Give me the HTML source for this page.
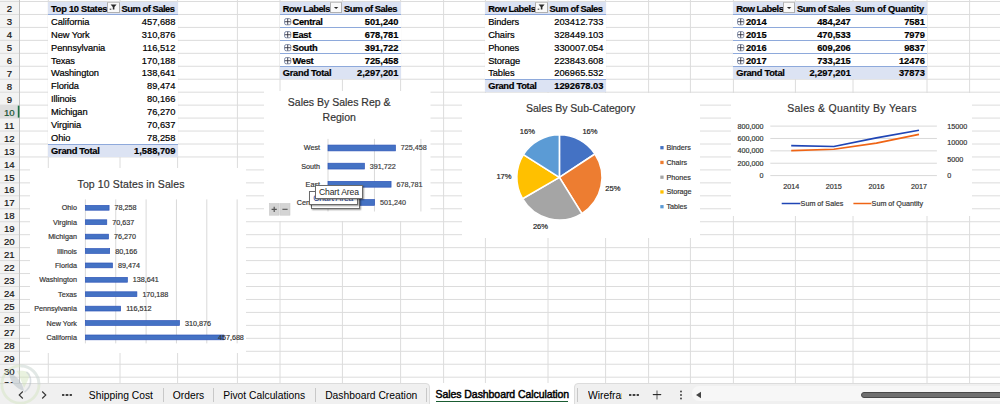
<!DOCTYPE html><html><head><meta charset="utf-8"><style>
*{margin:0;padding:0;box-sizing:border-box}
html,body{width:1000px;height:404px;overflow:hidden;background:#fff;font-family:"Liberation Sans",sans-serif;color:#000}
.a{position:absolute;white-space:nowrap}
.c{position:absolute;white-space:nowrap;font-size:9.3px;line-height:13px;height:13px;-webkit-text-stroke:0.2px #000}
.b{font-weight:bold}
.r{text-align:right}
.hdr{background:#d9e1f2}
</style></head><body>
<svg class="a" style="left:0;top:0" width="1000" height="384" viewBox="0 0 1000 384"><rect x="0" y="0" width="19.5" height="384" fill="#f3f3f3"/><rect x="0" y="105.14" width="19.5" height="12.96" fill="#dedede"/><line x1="0" x2="1000" y1="1.50" y2="1.50" stroke="#dcdcdc" stroke-width="1"/><line x1="0" x2="1000" y1="14.46" y2="14.46" stroke="#dcdcdc" stroke-width="1"/><line x1="0" x2="1000" y1="27.41" y2="27.41" stroke="#dcdcdc" stroke-width="1"/><line x1="0" x2="1000" y1="40.37" y2="40.37" stroke="#dcdcdc" stroke-width="1"/><line x1="0" x2="1000" y1="53.32" y2="53.32" stroke="#dcdcdc" stroke-width="1"/><line x1="0" x2="1000" y1="66.28" y2="66.28" stroke="#dcdcdc" stroke-width="1"/><line x1="0" x2="1000" y1="79.23" y2="79.23" stroke="#dcdcdc" stroke-width="1"/><line x1="0" x2="1000" y1="92.19" y2="92.19" stroke="#dcdcdc" stroke-width="1"/><line x1="0" x2="1000" y1="105.14" y2="105.14" stroke="#dcdcdc" stroke-width="1"/><line x1="0" x2="1000" y1="118.09" y2="118.09" stroke="#dcdcdc" stroke-width="1"/><line x1="0" x2="1000" y1="131.05" y2="131.05" stroke="#dcdcdc" stroke-width="1"/><line x1="0" x2="1000" y1="144.00" y2="144.00" stroke="#dcdcdc" stroke-width="1"/><line x1="0" x2="1000" y1="156.96" y2="156.96" stroke="#dcdcdc" stroke-width="1"/><line x1="0" x2="1000" y1="169.91" y2="169.91" stroke="#dcdcdc" stroke-width="1"/><line x1="0" x2="1000" y1="182.87" y2="182.87" stroke="#dcdcdc" stroke-width="1"/><line x1="0" x2="1000" y1="195.82" y2="195.82" stroke="#dcdcdc" stroke-width="1"/><line x1="0" x2="1000" y1="208.78" y2="208.78" stroke="#dcdcdc" stroke-width="1"/><line x1="0" x2="1000" y1="221.74" y2="221.74" stroke="#dcdcdc" stroke-width="1"/><line x1="0" x2="1000" y1="234.69" y2="234.69" stroke="#dcdcdc" stroke-width="1"/><line x1="0" x2="1000" y1="247.65" y2="247.65" stroke="#dcdcdc" stroke-width="1"/><line x1="0" x2="1000" y1="260.60" y2="260.60" stroke="#dcdcdc" stroke-width="1"/><line x1="0" x2="1000" y1="273.56" y2="273.56" stroke="#dcdcdc" stroke-width="1"/><line x1="0" x2="1000" y1="286.51" y2="286.51" stroke="#dcdcdc" stroke-width="1"/><line x1="0" x2="1000" y1="299.46" y2="299.46" stroke="#dcdcdc" stroke-width="1"/><line x1="0" x2="1000" y1="312.42" y2="312.42" stroke="#dcdcdc" stroke-width="1"/><line x1="0" x2="1000" y1="325.38" y2="325.38" stroke="#dcdcdc" stroke-width="1"/><line x1="0" x2="1000" y1="338.33" y2="338.33" stroke="#dcdcdc" stroke-width="1"/><line x1="0" x2="1000" y1="351.29" y2="351.29" stroke="#dcdcdc" stroke-width="1"/><line x1="0" x2="1000" y1="364.24" y2="364.24" stroke="#dcdcdc" stroke-width="1"/><line x1="0" x2="1000" y1="377.19" y2="377.19" stroke="#dcdcdc" stroke-width="1"/><line x1="48.30" x2="48.30" y1="0" y2="384" stroke="#dcdcdc" stroke-width="1"/><line x1="120.00" x2="120.00" y1="0" y2="384" stroke="#dcdcdc" stroke-width="1"/><line x1="177.60" x2="177.60" y1="0" y2="384" stroke="#dcdcdc" stroke-width="1"/><line x1="237.40" x2="237.40" y1="0" y2="384" stroke="#dcdcdc" stroke-width="1"/><line x1="280.00" x2="280.00" y1="0" y2="384" stroke="#dcdcdc" stroke-width="1"/><line x1="342.40" x2="342.40" y1="0" y2="384" stroke="#dcdcdc" stroke-width="1"/><line x1="400.60" x2="400.60" y1="0" y2="384" stroke="#dcdcdc" stroke-width="1"/><line x1="443.60" x2="443.60" y1="0" y2="384" stroke="#dcdcdc" stroke-width="1"/><line x1="485.40" x2="485.40" y1="0" y2="384" stroke="#dcdcdc" stroke-width="1"/><line x1="548.00" x2="548.00" y1="0" y2="384" stroke="#dcdcdc" stroke-width="1"/><line x1="605.60" x2="605.60" y1="0" y2="384" stroke="#dcdcdc" stroke-width="1"/><line x1="648.60" x2="648.60" y1="0" y2="384" stroke="#dcdcdc" stroke-width="1"/><line x1="690.40" x2="690.40" y1="0" y2="384" stroke="#dcdcdc" stroke-width="1"/><line x1="733.40" x2="733.40" y1="0" y2="384" stroke="#dcdcdc" stroke-width="1"/><line x1="795.40" x2="795.40" y1="0" y2="384" stroke="#dcdcdc" stroke-width="1"/><line x1="853.00" x2="853.00" y1="0" y2="384" stroke="#dcdcdc" stroke-width="1"/><line x1="927.00" x2="927.00" y1="0" y2="384" stroke="#dcdcdc" stroke-width="1"/><line x1="969.60" x2="969.60" y1="0" y2="384" stroke="#dcdcdc" stroke-width="1"/><line x1="19.5" x2="19.5" y1="0" y2="384" stroke="#c2c2c2" stroke-width="1"/><rect x="17.8" y="105.64" width="1.6" height="11.96" fill="#1e7145"/></svg>
<div class="c" style="left:0;width:18.6px;top:2.10px;text-align:center;color:#222;font-size:9.6px">2</div>
<div class="c" style="left:0;width:18.6px;top:15.05px;text-align:center;color:#222;font-size:9.6px">3</div>
<div class="c" style="left:0;width:18.6px;top:28.01px;text-align:center;color:#222;font-size:9.6px">4</div>
<div class="c" style="left:0;width:18.6px;top:40.97px;text-align:center;color:#222;font-size:9.6px">5</div>
<div class="c" style="left:0;width:18.6px;top:53.92px;text-align:center;color:#222;font-size:9.6px">6</div>
<div class="c" style="left:0;width:18.6px;top:66.88px;text-align:center;color:#222;font-size:9.6px">7</div>
<div class="c" style="left:0;width:18.6px;top:79.83px;text-align:center;color:#222;font-size:9.6px">8</div>
<div class="c" style="left:0;width:18.6px;top:92.78px;text-align:center;color:#222;font-size:9.6px">9</div>
<div class="c" style="left:0;width:18.6px;top:105.74px;text-align:center;color:#1e7145;font-size:9.6px">10</div>
<div class="c" style="left:0;width:18.6px;top:118.69px;text-align:center;color:#222;font-size:9.6px">11</div>
<div class="c" style="left:0;width:18.6px;top:131.65px;text-align:center;color:#222;font-size:9.6px">12</div>
<div class="c" style="left:0;width:18.6px;top:144.60px;text-align:center;color:#222;font-size:9.6px">13</div>
<div class="c" style="left:0;width:18.6px;top:157.56px;text-align:center;color:#222;font-size:9.6px">14</div>
<div class="c" style="left:0;width:18.6px;top:170.51px;text-align:center;color:#222;font-size:9.6px">15</div>
<div class="c" style="left:0;width:18.6px;top:183.47px;text-align:center;color:#222;font-size:9.6px">16</div>
<div class="c" style="left:0;width:18.6px;top:196.42px;text-align:center;color:#222;font-size:9.6px">17</div>
<div class="c" style="left:0;width:18.6px;top:209.38px;text-align:center;color:#222;font-size:9.6px">18</div>
<div class="c" style="left:0;width:18.6px;top:222.34px;text-align:center;color:#222;font-size:9.6px">19</div>
<div class="c" style="left:0;width:18.6px;top:235.29px;text-align:center;color:#222;font-size:9.6px">20</div>
<div class="c" style="left:0;width:18.6px;top:248.25px;text-align:center;color:#222;font-size:9.6px">21</div>
<div class="c" style="left:0;width:18.6px;top:261.20px;text-align:center;color:#222;font-size:9.6px">22</div>
<div class="c" style="left:0;width:18.6px;top:274.16px;text-align:center;color:#222;font-size:9.6px">23</div>
<div class="c" style="left:0;width:18.6px;top:287.11px;text-align:center;color:#222;font-size:9.6px">24</div>
<div class="c" style="left:0;width:18.6px;top:300.06px;text-align:center;color:#222;font-size:9.6px">25</div>
<div class="c" style="left:0;width:18.6px;top:313.02px;text-align:center;color:#222;font-size:9.6px">26</div>
<div class="c" style="left:0;width:18.6px;top:325.98px;text-align:center;color:#222;font-size:9.6px">27</div>
<div class="c" style="left:0;width:18.6px;top:338.93px;text-align:center;color:#222;font-size:9.6px">28</div>
<div class="c" style="left:0;width:18.6px;top:351.89px;text-align:center;color:#222;font-size:9.6px">29</div>
<div class="c" style="left:0;width:18.6px;top:364.84px;text-align:center;color:#222;font-size:9.6px">30</div>
<div class="c" style="left:0;width:18.6px;top:377.80px;text-align:center;color:#222;font-size:9.6px">31</div>
<div class="a" style="left:48.30px;width:129.30px;top:1.50px;height:155.46px;background:#fff"></div>
<div class="a" style="left:48.30px;width:129.30px;top:1.50px;height:12.96px;background:#dce3f3"></div>
<div class="c b" style="left:48.30px;top:2.70px;padding-left:2.8px;letter-spacing:-0.28px;">Top 10 States</div>
<div class="a" style="left:107.10px;width:12.70px;top:1.60px;height:11.90px;background:#f9f9f9;border:1px solid #b0b0b0;border-top-color:#c8c8c8"></div>
<svg class="a" style="left:107.10px;top:0" width="12" height="14" viewBox="0 0 12 14"><path d="M3.6 4.6h6l-2.2 2.4v2.6h-1.6v-2.6z" fill="#2a2a2a"/><rect x="2.7" y="8.7" width="1.6" height="1" fill="#333"/></svg>
<div class="c b" style="left:120.00px;top:2.70px;padding-left:1.5px;letter-spacing:-0.45px;">Sum of Sales</div>
<div class="a" style="left:48.30px;width:129.30px;top:13.96px;height:1.00px;background:#8ea9db"></div>
<div class="c" style="left:48.30px;top:15.65px;padding-left:2.8px;letter-spacing:-0.10px;">California</div>
<div class="c r" style="left:120.00px;width:57.60px;top:15.65px;padding-right:2.2px;letter-spacing:0.00px;">457,688</div>
<div class="c" style="left:48.30px;top:28.61px;padding-left:2.8px;letter-spacing:-0.10px;">New York</div>
<div class="c r" style="left:120.00px;width:57.60px;top:28.61px;padding-right:2.2px;letter-spacing:0.00px;">310,876</div>
<div class="c" style="left:48.30px;top:41.57px;padding-left:2.8px;letter-spacing:-0.10px;">Pennsylvania</div>
<div class="c r" style="left:120.00px;width:57.60px;top:41.57px;padding-right:2.2px;letter-spacing:0.00px;">116,512</div>
<div class="c" style="left:48.30px;top:54.52px;padding-left:2.8px;letter-spacing:-0.10px;">Texas</div>
<div class="c r" style="left:120.00px;width:57.60px;top:54.52px;padding-right:2.2px;letter-spacing:0.00px;">170,188</div>
<div class="c" style="left:48.30px;top:67.48px;padding-left:2.8px;letter-spacing:-0.10px;">Washington</div>
<div class="c r" style="left:120.00px;width:57.60px;top:67.48px;padding-right:2.2px;letter-spacing:0.00px;">138,641</div>
<div class="c" style="left:48.30px;top:80.43px;padding-left:2.8px;letter-spacing:-0.10px;">Florida</div>
<div class="c r" style="left:120.00px;width:57.60px;top:80.43px;padding-right:2.2px;letter-spacing:0.00px;">89,474</div>
<div class="c" style="left:48.30px;top:93.39px;padding-left:2.8px;letter-spacing:-0.10px;">Illinois</div>
<div class="c r" style="left:120.00px;width:57.60px;top:93.39px;padding-right:2.2px;letter-spacing:0.00px;">80,166</div>
<div class="c" style="left:48.30px;top:106.34px;padding-left:2.8px;letter-spacing:-0.10px;">Michigan</div>
<div class="c r" style="left:120.00px;width:57.60px;top:106.34px;padding-right:2.2px;letter-spacing:0.00px;">76,270</div>
<div class="c" style="left:48.30px;top:119.30px;padding-left:2.8px;letter-spacing:-0.10px;">Virginia</div>
<div class="c r" style="left:120.00px;width:57.60px;top:119.30px;padding-right:2.2px;letter-spacing:0.00px;">70,637</div>
<div class="c" style="left:48.30px;top:132.25px;padding-left:2.8px;letter-spacing:-0.10px;">Ohio</div>
<div class="c r" style="left:120.00px;width:57.60px;top:132.25px;padding-right:2.2px;letter-spacing:0.00px;">78,258</div>
<div class="a" style="left:48.30px;width:129.30px;top:144.00px;height:12.96px;background:#dce3f3"></div>
<div class="a" style="left:48.30px;width:129.30px;top:143.50px;height:1.00px;background:#8ea9db"></div>
<div class="c b" style="left:48.30px;top:145.20px;padding-left:2.8px;letter-spacing:-0.28px;">Grand Total</div>
<div class="c b r" style="left:120.00px;width:57.60px;top:145.20px;padding-right:2.2px;letter-spacing:0.00px;">1,588,709</div>
<div class="a" style="left:280.00px;width:120.60px;top:1.50px;height:77.73px;background:#fff"></div>
<div class="a" style="left:280.00px;width:120.60px;top:1.50px;height:12.96px;background:#dce3f3"></div>
<div class="c b" style="left:280.00px;top:2.70px;padding-left:2.8px;letter-spacing:-0.45px;">Row Labels</div>
<div class="a" style="left:330.30px;width:12.10px;top:1.60px;height:11.90px;background:#f9f9f9;border:1px solid #b0b0b0;border-top-color:#c8c8c8"></div>
<svg class="a" style="left:331.35px;top:0" width="10" height="14" viewBox="0 0 10 14"><path d="M2.9 7h4.4l-2.2 2.1z" fill="#2a2a2a"/></svg>
<div class="c b" style="left:342.40px;top:2.70px;padding-left:1.5px;letter-spacing:-0.45px;">Sum of Sales</div>
<div class="a" style="left:280.00px;width:120.60px;top:13.96px;height:1.00px;background:#8ea9db"></div>
<svg class="a" style="left:283.60px;top:17.63px" width="8" height="8" viewBox="0 0 8 8"><rect x="0.6" y="0.6" width="6.2" height="6.2" rx="1.6" fill="#fff" stroke="#6a7898" stroke-width="0.85"/><path d="M0.8 3.7h5.8M3.7 0.8v5.8" stroke="#2a2a3a" stroke-width="0.85"/></svg>
<div class="c b" style="left:280.00px;top:15.65px;padding-left:12.5px;letter-spacing:-0.28px;">Central</div>
<div class="c b r" style="left:342.40px;width:58.20px;top:15.65px;padding-right:2.2px;letter-spacing:0.00px;">501,240</div>
<div class="a" style="left:280.00px;width:120.60px;top:26.91px;height:1.00px;background:#8ea9db"></div>
<svg class="a" style="left:283.60px;top:30.59px" width="8" height="8" viewBox="0 0 8 8"><rect x="0.6" y="0.6" width="6.2" height="6.2" rx="1.6" fill="#fff" stroke="#6a7898" stroke-width="0.85"/><path d="M0.8 3.7h5.8M3.7 0.8v5.8" stroke="#2a2a3a" stroke-width="0.85"/></svg>
<div class="c b" style="left:280.00px;top:28.61px;padding-left:12.5px;letter-spacing:-0.28px;">East</div>
<div class="c b r" style="left:342.40px;width:58.20px;top:28.61px;padding-right:2.2px;letter-spacing:0.00px;">678,781</div>
<div class="a" style="left:280.00px;width:120.60px;top:39.87px;height:1.00px;background:#8ea9db"></div>
<svg class="a" style="left:283.60px;top:43.54px" width="8" height="8" viewBox="0 0 8 8"><rect x="0.6" y="0.6" width="6.2" height="6.2" rx="1.6" fill="#fff" stroke="#6a7898" stroke-width="0.85"/><path d="M0.8 3.7h5.8M3.7 0.8v5.8" stroke="#2a2a3a" stroke-width="0.85"/></svg>
<div class="c b" style="left:280.00px;top:41.57px;padding-left:12.5px;letter-spacing:-0.28px;">South</div>
<div class="c b r" style="left:342.40px;width:58.20px;top:41.57px;padding-right:2.2px;letter-spacing:0.00px;">391,722</div>
<div class="a" style="left:280.00px;width:120.60px;top:52.82px;height:1.00px;background:#8ea9db"></div>
<svg class="a" style="left:283.60px;top:56.50px" width="8" height="8" viewBox="0 0 8 8"><rect x="0.6" y="0.6" width="6.2" height="6.2" rx="1.6" fill="#fff" stroke="#6a7898" stroke-width="0.85"/><path d="M0.8 3.7h5.8M3.7 0.8v5.8" stroke="#2a2a3a" stroke-width="0.85"/></svg>
<div class="c b" style="left:280.00px;top:54.52px;padding-left:12.5px;letter-spacing:-0.28px;">West</div>
<div class="c b r" style="left:342.40px;width:58.20px;top:54.52px;padding-right:2.2px;letter-spacing:0.00px;">725,458</div>
<div class="a" style="left:280.00px;width:120.60px;top:65.78px;height:1.00px;background:#8ea9db"></div>
<div class="a" style="left:280.00px;width:120.60px;top:66.28px;height:12.96px;background:#dce3f3"></div>
<div class="a" style="left:280.00px;width:120.60px;top:65.78px;height:1.00px;background:#8ea9db"></div>
<div class="c b" style="left:280.00px;top:67.48px;padding-left:2.8px;letter-spacing:-0.28px;">Grand Total</div>
<div class="c b r" style="left:342.40px;width:58.20px;top:67.48px;padding-right:2.2px;letter-spacing:0.00px;">2,297,201</div>
<div class="a" style="left:485.40px;width:120.20px;top:1.50px;height:90.69px;background:#fff"></div>
<div class="a" style="left:485.40px;width:120.20px;top:1.50px;height:12.96px;background:#dce3f3"></div>
<div class="c b" style="left:485.40px;top:2.70px;padding-left:2.8px;letter-spacing:-0.45px;">Row Labels</div>
<div class="a" style="left:535.30px;width:12.30px;top:1.60px;height:11.90px;background:#f9f9f9;border:1px solid #b0b0b0;border-top-color:#c8c8c8"></div>
<svg class="a" style="left:535.30px;top:0" width="12" height="14" viewBox="0 0 12 14"><path d="M3.6 4.6h6l-2.2 2.4v2.6h-1.6v-2.6z" fill="#2a2a2a"/><rect x="2.7" y="8.7" width="1.6" height="1" fill="#333"/></svg>
<div class="c b" style="left:548.00px;top:2.70px;padding-left:1.5px;letter-spacing:-0.45px;">Sum of Sales</div>
<div class="a" style="left:485.40px;width:120.20px;top:13.96px;height:1.00px;background:#8ea9db"></div>
<div class="c" style="left:485.40px;top:15.65px;padding-left:2.8px;letter-spacing:-0.10px;">Binders</div>
<div class="c r" style="left:548.00px;width:57.60px;top:15.65px;padding-right:2.2px;letter-spacing:0.00px;">203412.733</div>
<div class="c" style="left:485.40px;top:28.61px;padding-left:2.8px;letter-spacing:-0.10px;">Chairs</div>
<div class="c r" style="left:548.00px;width:57.60px;top:28.61px;padding-right:2.2px;letter-spacing:0.00px;">328449.103</div>
<div class="c" style="left:485.40px;top:41.57px;padding-left:2.8px;letter-spacing:-0.10px;">Phones</div>
<div class="c r" style="left:548.00px;width:57.60px;top:41.57px;padding-right:2.2px;letter-spacing:0.00px;">330007.054</div>
<div class="c" style="left:485.40px;top:54.52px;padding-left:2.8px;letter-spacing:-0.10px;">Storage</div>
<div class="c r" style="left:548.00px;width:57.60px;top:54.52px;padding-right:2.2px;letter-spacing:0.00px;">223843.608</div>
<div class="c" style="left:485.40px;top:67.48px;padding-left:2.8px;letter-spacing:-0.10px;">Tables</div>
<div class="c r" style="left:548.00px;width:57.60px;top:67.48px;padding-right:2.2px;letter-spacing:0.00px;">206965.532</div>
<div class="a" style="left:485.40px;width:120.20px;top:79.23px;height:12.96px;background:#dce3f3"></div>
<div class="a" style="left:485.40px;width:120.20px;top:78.73px;height:1.00px;background:#8ea9db"></div>
<div class="c b" style="left:485.40px;top:80.43px;padding-left:2.8px;letter-spacing:-0.28px;">Grand Total</div>
<div class="c b r" style="left:548.00px;width:57.60px;top:80.43px;padding-right:2.2px;letter-spacing:0.00px;">1292678.03</div>
<div class="a" style="left:733.40px;width:193.60px;top:1.50px;height:77.73px;background:#fff"></div>
<div class="a" style="left:733.40px;width:193.60px;top:1.50px;height:12.96px;background:#dce3f3"></div>
<div class="c b" style="left:733.40px;top:2.70px;padding-left:2.8px;letter-spacing:-0.45px;">Row Labels</div>
<div class="a" style="left:783.40px;width:12.00px;top:1.60px;height:11.90px;background:#f9f9f9;border:1px solid #b0b0b0;border-top-color:#c8c8c8"></div>
<svg class="a" style="left:784.40px;top:0" width="10" height="14" viewBox="0 0 10 14"><path d="M2.9 7h4.4l-2.2 2.1z" fill="#2a2a2a"/></svg>
<div class="c b" style="left:795.40px;top:2.70px;padding-left:1.5px;letter-spacing:-0.45px;">Sum of Sales</div>
<div class="c b" style="left:853.00px;top:2.70px;padding-left:2.3px;letter-spacing:-0.28px;letter-spacing:-0.2px;">Sum of Quantity</div>
<div class="a" style="left:733.40px;width:193.60px;top:13.96px;height:1.00px;background:#8ea9db"></div>
<svg class="a" style="left:737.00px;top:17.63px" width="8" height="8" viewBox="0 0 8 8"><rect x="0.6" y="0.6" width="6.2" height="6.2" rx="1.6" fill="#fff" stroke="#6a7898" stroke-width="0.85"/><path d="M0.8 3.7h5.8M3.7 0.8v5.8" stroke="#2a2a3a" stroke-width="0.85"/></svg>
<div class="c b" style="left:733.40px;top:15.65px;padding-left:12.5px;letter-spacing:0.00px;">2014</div>
<div class="c b r" style="left:795.40px;width:57.60px;top:15.65px;padding-right:2.2px;letter-spacing:0.00px;">484,247</div>
<div class="c b r" style="left:853.00px;width:74.00px;top:15.65px;padding-right:2.2px;letter-spacing:0.00px;">7581</div>
<div class="a" style="left:733.40px;width:193.60px;top:26.91px;height:1.00px;background:#8ea9db"></div>
<svg class="a" style="left:737.00px;top:30.59px" width="8" height="8" viewBox="0 0 8 8"><rect x="0.6" y="0.6" width="6.2" height="6.2" rx="1.6" fill="#fff" stroke="#6a7898" stroke-width="0.85"/><path d="M0.8 3.7h5.8M3.7 0.8v5.8" stroke="#2a2a3a" stroke-width="0.85"/></svg>
<div class="c b" style="left:733.40px;top:28.61px;padding-left:12.5px;letter-spacing:0.00px;">2015</div>
<div class="c b r" style="left:795.40px;width:57.60px;top:28.61px;padding-right:2.2px;letter-spacing:0.00px;">470,533</div>
<div class="c b r" style="left:853.00px;width:74.00px;top:28.61px;padding-right:2.2px;letter-spacing:0.00px;">7979</div>
<div class="a" style="left:733.40px;width:193.60px;top:39.87px;height:1.00px;background:#8ea9db"></div>
<svg class="a" style="left:737.00px;top:43.54px" width="8" height="8" viewBox="0 0 8 8"><rect x="0.6" y="0.6" width="6.2" height="6.2" rx="1.6" fill="#fff" stroke="#6a7898" stroke-width="0.85"/><path d="M0.8 3.7h5.8M3.7 0.8v5.8" stroke="#2a2a3a" stroke-width="0.85"/></svg>
<div class="c b" style="left:733.40px;top:41.57px;padding-left:12.5px;letter-spacing:0.00px;">2016</div>
<div class="c b r" style="left:795.40px;width:57.60px;top:41.57px;padding-right:2.2px;letter-spacing:0.00px;">609,206</div>
<div class="c b r" style="left:853.00px;width:74.00px;top:41.57px;padding-right:2.2px;letter-spacing:0.00px;">9837</div>
<div class="a" style="left:733.40px;width:193.60px;top:52.82px;height:1.00px;background:#8ea9db"></div>
<svg class="a" style="left:737.00px;top:56.50px" width="8" height="8" viewBox="0 0 8 8"><rect x="0.6" y="0.6" width="6.2" height="6.2" rx="1.6" fill="#fff" stroke="#6a7898" stroke-width="0.85"/><path d="M0.8 3.7h5.8M3.7 0.8v5.8" stroke="#2a2a3a" stroke-width="0.85"/></svg>
<div class="c b" style="left:733.40px;top:54.52px;padding-left:12.5px;letter-spacing:0.00px;">2017</div>
<div class="c b r" style="left:795.40px;width:57.60px;top:54.52px;padding-right:2.2px;letter-spacing:0.00px;">733,215</div>
<div class="c b r" style="left:853.00px;width:74.00px;top:54.52px;padding-right:2.2px;letter-spacing:0.00px;">12476</div>
<div class="a" style="left:733.40px;width:193.60px;top:65.78px;height:1.00px;background:#8ea9db"></div>
<div class="a" style="left:733.40px;width:193.60px;top:66.28px;height:12.96px;background:#dce3f3"></div>
<div class="a" style="left:733.40px;width:193.60px;top:65.78px;height:1.00px;background:#8ea9db"></div>
<div class="c b" style="left:733.40px;top:67.48px;padding-left:2.8px;letter-spacing:-0.28px;">Grand Total</div>
<div class="c b r" style="left:795.40px;width:57.60px;top:67.48px;padding-right:2.2px;letter-spacing:0.00px;">2,297,201</div>
<div class="c b r" style="left:853.00px;width:74.00px;top:67.48px;padding-right:2.2px;letter-spacing:0.00px;">37873</div>
<svg class="a" style="left:30.00px;top:168.00px" width="216.00" height="185.00" viewBox="30.00 168.00 216.00 185.00" font-family="Liberation Sans, sans-serif">
<rect x="30.00" y="168.00" width="216.00" height="185.00" fill="#fff"/>
<text x="131.10" y="187.90" font-size="10.50" text-anchor="middle" fill="#333" stroke="#333" stroke-width="0.18" letter-spacing="0.12">Top 10 States in Sales</text>
<line x1="85.40" x2="85.40" y1="199.40" y2="343.40" stroke="#d9d9d9" stroke-width="1"/>
<line x1="115.75" x2="115.75" y1="199.40" y2="343.40" stroke="#d9d9d9" stroke-width="1"/>
<line x1="146.10" x2="146.10" y1="199.40" y2="343.40" stroke="#d9d9d9" stroke-width="1"/>
<line x1="176.45" x2="176.45" y1="199.40" y2="343.40" stroke="#d9d9d9" stroke-width="1"/>
<line x1="206.80" x2="206.80" y1="199.40" y2="343.40" stroke="#d9d9d9" stroke-width="1"/>
<line x1="237.15" x2="237.15" y1="199.40" y2="343.40" stroke="#d9d9d9" stroke-width="1"/>
<rect x="85.40" y="205.40" width="23.67" height="4.8" fill="#4472c4" stroke="#2e55b8" stroke-width="0.7"/>
<text x="76.90" y="210.30" font-size="7.20" text-anchor="end" fill="#333333" stroke="#333333" stroke-width="0.18" >Ohio</text>
<text x="114.57" y="210.30" font-size="7.20" text-anchor="start" fill="#333" stroke="#333" stroke-width="0.18" >78,258</text>
<rect x="85.40" y="219.80" width="21.37" height="4.8" fill="#4472c4" stroke="#2e55b8" stroke-width="0.7"/>
<text x="76.90" y="224.70" font-size="7.20" text-anchor="end" fill="#333333" stroke="#333333" stroke-width="0.18" >Virginia</text>
<text x="112.27" y="224.70" font-size="7.20" text-anchor="start" fill="#333" stroke="#333" stroke-width="0.18" >70,637</text>
<rect x="85.40" y="234.20" width="23.07" height="4.8" fill="#4472c4" stroke="#2e55b8" stroke-width="0.7"/>
<text x="76.90" y="239.10" font-size="7.20" text-anchor="end" fill="#333333" stroke="#333333" stroke-width="0.18" >Michigan</text>
<text x="113.97" y="239.10" font-size="7.20" text-anchor="start" fill="#333" stroke="#333" stroke-width="0.18" >76,270</text>
<rect x="85.40" y="248.60" width="24.25" height="4.8" fill="#4472c4" stroke="#2e55b8" stroke-width="0.7"/>
<text x="76.90" y="253.50" font-size="7.20" text-anchor="end" fill="#333333" stroke="#333333" stroke-width="0.18" >Illinois</text>
<text x="115.15" y="253.50" font-size="7.20" text-anchor="start" fill="#333" stroke="#333" stroke-width="0.18" >80,166</text>
<rect x="85.40" y="263.00" width="27.07" height="4.8" fill="#4472c4" stroke="#2e55b8" stroke-width="0.7"/>
<text x="76.90" y="267.90" font-size="7.20" text-anchor="end" fill="#333333" stroke="#333333" stroke-width="0.18" >Florida</text>
<text x="117.97" y="267.90" font-size="7.20" text-anchor="start" fill="#333" stroke="#333" stroke-width="0.18" >89,474</text>
<rect x="85.40" y="277.40" width="41.94" height="4.8" fill="#4472c4" stroke="#2e55b8" stroke-width="0.7"/>
<text x="76.90" y="282.30" font-size="7.20" text-anchor="end" fill="#333333" stroke="#333333" stroke-width="0.18" >Washington</text>
<text x="132.84" y="282.30" font-size="7.20" text-anchor="start" fill="#333" stroke="#333" stroke-width="0.18" >138,641</text>
<rect x="85.40" y="291.80" width="51.48" height="4.8" fill="#4472c4" stroke="#2e55b8" stroke-width="0.7"/>
<text x="76.90" y="296.70" font-size="7.20" text-anchor="end" fill="#333333" stroke="#333333" stroke-width="0.18" >Texas</text>
<text x="142.38" y="296.70" font-size="7.20" text-anchor="start" fill="#333" stroke="#333" stroke-width="0.18" >170,188</text>
<rect x="85.40" y="306.20" width="35.24" height="4.8" fill="#4472c4" stroke="#2e55b8" stroke-width="0.7"/>
<text x="76.90" y="311.10" font-size="7.20" text-anchor="end" fill="#333333" stroke="#333333" stroke-width="0.18" >Pennsylvania</text>
<text x="126.14" y="311.10" font-size="7.20" text-anchor="start" fill="#333" stroke="#333" stroke-width="0.18" >116,512</text>
<rect x="85.40" y="320.60" width="94.04" height="4.8" fill="#4472c4" stroke="#2e55b8" stroke-width="0.7"/>
<text x="76.90" y="325.50" font-size="7.20" text-anchor="end" fill="#333333" stroke="#333333" stroke-width="0.18" >New York</text>
<text x="184.94" y="325.50" font-size="7.20" text-anchor="start" fill="#333" stroke="#333" stroke-width="0.18" >310,876</text>
<rect x="85.40" y="335.00" width="138.45" height="4.8" fill="#4472c4" stroke="#2e55b8" stroke-width="0.7"/>
<text x="76.90" y="339.90" font-size="7.20" text-anchor="end" fill="#333333" stroke="#333333" stroke-width="0.18" >California</text>
<text x="217.90" y="339.90" font-size="7.20" text-anchor="start" fill="#333" stroke="#333" stroke-width="0.18" >457,688</text>
</svg>
<svg class="a" style="left:264.00px;top:90.50px" width="166.50" height="130.50" viewBox="264.00 90.50 166.50 130.50" font-family="Liberation Sans, sans-serif">
<rect x="264.00" y="90.50" width="166.50" height="130.50" fill="#fff"/>
<text x="339.20" y="105.30" font-size="10.50" text-anchor="middle" fill="#333" stroke="#333" stroke-width="0.18" >Sales By Sales Rep &amp;</text>
<text x="339.20" y="120.40" font-size="10.50" text-anchor="middle" fill="#333" stroke="#333" stroke-width="0.18" >Region</text>
<line x1="328.00" x2="328.00" y1="138.40" y2="211.00" stroke="#d9d9d9" stroke-width="1"/>
<line x1="374.45" x2="374.45" y1="138.40" y2="211.00" stroke="#d9d9d9" stroke-width="1"/>
<line x1="420.90" x2="420.90" y1="138.40" y2="211.00" stroke="#d9d9d9" stroke-width="1"/>
<rect x="328.00" y="144.57" width="67.40" height="5.8" fill="#4472c4" stroke="#2e55b8" stroke-width="0.7"/>
<text x="320.00" y="149.97" font-size="7.20" text-anchor="end" fill="#333333" stroke="#333333" stroke-width="0.18" >West</text>
<text x="400.80" y="149.97" font-size="7.20" text-anchor="start" fill="#404040" stroke="#404040" stroke-width="0.18" >725,458</text>
<rect x="328.00" y="162.72" width="36.39" height="5.8" fill="#4472c4" stroke="#2e55b8" stroke-width="0.7"/>
<text x="320.00" y="168.12" font-size="7.20" text-anchor="end" fill="#333333" stroke="#333333" stroke-width="0.18" >South</text>
<text x="369.79" y="168.12" font-size="7.20" text-anchor="start" fill="#404040" stroke="#404040" stroke-width="0.18" >391,722</text>
<rect x="328.00" y="180.87" width="63.06" height="5.8" fill="#4472c4" stroke="#2e55b8" stroke-width="0.7"/>
<text x="320.00" y="186.27" font-size="7.20" text-anchor="end" fill="#333333" stroke="#333333" stroke-width="0.18" >East</text>
<text x="396.46" y="186.27" font-size="7.20" text-anchor="start" fill="#404040" stroke="#404040" stroke-width="0.18" >678,781</text>
<rect x="328.00" y="199.02" width="46.57" height="5.8" fill="#4472c4" stroke="#2e55b8" stroke-width="0.7"/>
<text x="320.00" y="204.42" font-size="7.20" text-anchor="end" fill="#333333" stroke="#333333" stroke-width="0.18" >Central</text>
<text x="379.97" y="204.42" font-size="7.20" text-anchor="start" fill="#404040" stroke="#404040" stroke-width="0.18" >501,240</text>
<rect x="269.4" y="203" width="9.6" height="11.7" fill="#d4d4d4" stroke="#c4c4c4" stroke-width="0.5"/>
<rect x="279.9" y="203" width="10.1" height="11.7" fill="#d4d4d4" stroke="#c4c4c4" stroke-width="0.5"/>
<path d="M271.6 208.85h5.2M274.2 206.2v5.3" stroke="#555" stroke-width="1.2"/>
<path d="M282.4 208.85h5.2" stroke="#666" stroke-width="1.3"/>
</svg>
<div class="a" style="left:310.9px;top:195.2px;width:49.2px;height:14.3px;background:#fff;border:1px solid #6a6a6a;box-shadow:1px 1px 1.5px rgba(0,0,0,.4)"></div>
<div class="a" style="left:309.4px;top:190.9px;width:48.5px;height:14.3px;background:#fff;border:1px solid #6a6a6a;box-shadow:1px 1px 1.5px rgba(0,0,0,.4);font-size:8.6px;line-height:12px;padding-left:2.8px;letter-spacing:-0.1px;color:#1f3f8f;overflow:hidden">Chart Area</div>
<div class="a" style="left:315.3px;top:185.4px;width:48.1px;height:13.8px;background:#fff;border:1px solid #6a6a6a;box-shadow:1px 1px 1.5px rgba(0,0,0,.4);font-size:8.6px;line-height:12px;padding-left:2.6px;letter-spacing:-0.1px;color:#262626">Chart Area</div>
<svg class="a" style="left:462.00px;top:92.50px" width="238.00" height="145.00" viewBox="462.00 92.50 238.00 145.00" font-family="Liberation Sans, sans-serif">
<rect x="462.00" y="92.50" width="238.00" height="145.00" fill="#fff"/>
<text x="580.60" y="111.70" font-size="10.50" text-anchor="middle" fill="#333" stroke="#333" stroke-width="0.18" >Sales By Sub-Category</text>
<path d="M559.40 176.90 L559.40 134.30 A42.60 42.60 0 0 1 594.98 153.48 Z" fill="#4472c4" stroke="#fff" stroke-width="1.6" stroke-linejoin="round"/>
<path d="M559.40 176.90 L594.98 153.48 A42.60 42.60 0 0 1 581.90 213.07 Z" fill="#ed7d31" stroke="#fff" stroke-width="1.6" stroke-linejoin="round"/>
<path d="M559.40 176.90 L581.90 213.07 A42.60 42.60 0 0 1 522.50 198.19 Z" fill="#a5a5a5" stroke="#fff" stroke-width="1.6" stroke-linejoin="round"/>
<path d="M559.40 176.90 L522.50 198.19 A42.60 42.60 0 0 1 523.42 154.10 Z" fill="#ffc000" stroke="#fff" stroke-width="1.6" stroke-linejoin="round"/>
<path d="M559.40 176.90 L523.42 154.10 A42.60 42.60 0 0 1 559.40 134.30 Z" fill="#5b9bd5" stroke="#fff" stroke-width="1.6" stroke-linejoin="round"/>
<text x="590.00" y="133.70" font-size="7.60" text-anchor="middle" fill="#222" stroke="#222" stroke-width="0.18" >16%</text>
<text x="612.90" y="190.70" font-size="7.60" text-anchor="middle" fill="#222" stroke="#222" stroke-width="0.18" >25%</text>
<text x="540.50" y="228.30" font-size="7.60" text-anchor="middle" fill="#222" stroke="#222" stroke-width="0.18" >26%</text>
<text x="504.00" y="178.40" font-size="7.60" text-anchor="middle" fill="#222" stroke="#222" stroke-width="0.18" >17%</text>
<text x="527.40" y="133.70" font-size="7.60" text-anchor="middle" fill="#222" stroke="#222" stroke-width="0.18" >16%</text>
<rect x="660.3" y="145.55" width="3.3" height="3.3" fill="#4472c4"/>
<text x="666.40" y="149.70" font-size="7.20" text-anchor="start" fill="#333333" stroke="#333333" stroke-width="0.18" >Binders</text>
<rect x="660.3" y="160.30" width="3.3" height="3.3" fill="#ed7d31"/>
<text x="666.40" y="164.45" font-size="7.20" text-anchor="start" fill="#333333" stroke="#333333" stroke-width="0.18" >Chairs</text>
<rect x="660.3" y="175.05" width="3.3" height="3.3" fill="#a5a5a5"/>
<text x="666.40" y="179.20" font-size="7.20" text-anchor="start" fill="#333333" stroke="#333333" stroke-width="0.18" >Phones</text>
<rect x="660.3" y="189.80" width="3.3" height="3.3" fill="#ffc000"/>
<text x="666.40" y="193.95" font-size="7.20" text-anchor="start" fill="#333333" stroke="#333333" stroke-width="0.18" >Storage</text>
<rect x="660.3" y="204.55" width="3.3" height="3.3" fill="#5b9bd5"/>
<text x="666.40" y="208.70" font-size="7.20" text-anchor="start" fill="#333333" stroke="#333333" stroke-width="0.18" >Tables</text>
</svg>
<svg class="a" style="left:731.00px;top:92.50px" width="241.00" height="123.50" viewBox="731.00 92.50 241.00 123.50" font-family="Liberation Sans, sans-serif">
<rect x="731.00" y="92.50" width="241.00" height="123.50" fill="#fff"/>
<text x="852.00" y="111.10" font-size="10.50" text-anchor="middle" fill="#333" stroke="#333" stroke-width="0.18" letter-spacing="0.28">Sales &amp; Quantity By Years</text>
<line x1="770.30" x2="936.90" y1="175.10" y2="175.10" stroke="#d9d9d9" stroke-width="1"/>
<text x="763.60" y="177.60" font-size="7.20" text-anchor="end" fill="#333333" stroke="#333333" stroke-width="0.18" >0</text>
<line x1="770.30" x2="936.90" y1="162.72" y2="162.72" stroke="#d9d9d9" stroke-width="1"/>
<text x="763.60" y="165.22" font-size="7.20" text-anchor="end" fill="#333333" stroke="#333333" stroke-width="0.18" >200,000</text>
<line x1="770.30" x2="936.90" y1="150.35" y2="150.35" stroke="#d9d9d9" stroke-width="1"/>
<text x="763.60" y="152.85" font-size="7.20" text-anchor="end" fill="#333333" stroke="#333333" stroke-width="0.18" >400,000</text>
<line x1="770.30" x2="936.90" y1="137.97" y2="137.97" stroke="#d9d9d9" stroke-width="1"/>
<text x="763.60" y="140.47" font-size="7.20" text-anchor="end" fill="#333333" stroke="#333333" stroke-width="0.18" >600,000</text>
<line x1="770.30" x2="936.90" y1="125.60" y2="125.60" stroke="#d9d9d9" stroke-width="1"/>
<text x="763.60" y="128.10" font-size="7.20" text-anchor="end" fill="#333333" stroke="#333333" stroke-width="0.18" >800,000</text>
<text x="947.20" y="177.60" font-size="7.20" text-anchor="start" fill="#333333" stroke="#333333" stroke-width="0.18" >0</text>
<text x="947.20" y="161.10" font-size="7.20" text-anchor="start" fill="#333333" stroke="#333333" stroke-width="0.18" >5000</text>
<text x="947.20" y="144.60" font-size="7.20" text-anchor="start" fill="#333333" stroke="#333333" stroke-width="0.18" >10000</text>
<text x="947.20" y="128.10" font-size="7.20" text-anchor="start" fill="#333333" stroke="#333333" stroke-width="0.18" >15000</text>
<text x="791.20" y="188.80" font-size="7.20" text-anchor="middle" fill="#333333" stroke="#333333" stroke-width="0.18" >2014</text>
<text x="833.80" y="188.80" font-size="7.20" text-anchor="middle" fill="#333333" stroke="#333333" stroke-width="0.18" >2015</text>
<text x="876.40" y="188.80" font-size="7.20" text-anchor="middle" fill="#333333" stroke="#333333" stroke-width="0.18" >2016</text>
<text x="919.00" y="188.80" font-size="7.20" text-anchor="middle" fill="#333333" stroke="#333333" stroke-width="0.18" >2017</text>
<polyline points="791.20,150.08 833.80,148.77 876.40,142.64 919.00,133.93" fill="none" stroke="#ef6415" stroke-width="1.7" stroke-linejoin="round"/>
<polyline points="791.20,145.14 833.80,145.99 876.40,137.41 919.00,129.73" fill="none" stroke="#1f45b5" stroke-width="1.7" stroke-linejoin="round"/>
<line x1="781.7" x2="800.4" y1="203.0" y2="203.0" stroke="#1f45b5" stroke-width="1.5"/>
<text x="800.60" y="205.30" font-size="7.20" text-anchor="start" fill="#333333" stroke="#333333" stroke-width="0.18" >Sum of Sales</text>
<line x1="853.4" x2="871.4" y1="203.0" y2="203.0" stroke="#ef6415" stroke-width="1.5"/>
<text x="871.60" y="205.30" font-size="7.20" text-anchor="start" fill="#333333" stroke="#333333" stroke-width="0.18" >Sum of Quantity</text>
</svg>
<div class="a" style="left:0;top:383.2px;width:1000px;height:20.8px;background:#fff"></div>
<div class="a" style="left:-5px;top:383.2px;width:434.5px;height:25px;background:#f0f0f0;border:1px solid #dcdcdc;border-radius:0 4px 0 0"></div>
<div class="a" style="left:574.3px;top:383.2px;width:440px;height:25px;background:#f0f0f0;border:1px solid #dcdcdc;border-radius:4px 0 0 0"></div>
<svg class="a" style="left:14px;top:388px" width="40" height="14" viewBox="0 0 40 14"><path d="M8.8 3.5l-3.6 3.5 3.6 3.5" fill="none" stroke="#333" stroke-width="1.1"/><path d="M28.2 3.5l3.6 3.5-3.6 3.5" fill="none" stroke="#333" stroke-width="1.1"/></svg>
<svg class="a" style="left:61.30px;top:392.00px" width="12" height="6" viewBox="0 0 12 6"><circle cx="2" cy="3" r="1.05" fill="#222"/><circle cx="6" cy="3" r="1.05" fill="#222"/><circle cx="10" cy="3" r="1.05" fill="#222"/><path d="M2 3h8" stroke="#222" stroke-width="0.6"/></svg>
<div class="a" style="left:88.8px;top:389.4px;font-size:10.3px;line-height:14px;color:#000">Shipping Cost</div>
<div class="a" style="left:163px;top:387.5px;width:1px;height:14px;background:#c8c8c8"></div>
<div class="a" style="left:172.8px;top:389.4px;font-size:10.3px;line-height:14px;color:#000">Orders</div>
<div class="a" style="left:213.4px;top:387.5px;width:1px;height:14px;background:#c8c8c8"></div>
<div class="a" style="left:223.3px;top:389.4px;font-size:10.3px;line-height:14px;color:#000">Pivot Calculations</div>
<div class="a" style="left:314.5px;top:387.5px;width:1px;height:14px;background:#c8c8c8"></div>
<div class="a" style="left:325.2px;top:389.4px;font-size:10.3px;line-height:14px;color:#000">Dashboard Creation</div>
<div class="a" style="left:426.2px;top:387.5px;width:1px;height:14px;background:#c8c8c8"></div>
<div class="a" style="left:435.6px;top:387.2px;font-size:10.5px;line-height:14px;color:#000;-webkit-text-stroke:0.45px #000;letter-spacing:-0.07px">Sales Dashboard Calculation</div>
<div class="a" style="left:435.8px;top:400.7px;width:132.7px;height:1.6px;background:#1a5c32"></div>
<div class="a" style="left:577.4px;top:387.5px;width:1px;height:14px;background:#c8c8c8"></div>
<div class="a" style="left:588px;top:389.4px;width:33.6px;overflow:hidden;font-size:10.3px;line-height:14px;color:#000">Wireframe</div>
<svg class="a" style="left:627.50px;top:392.00px" width="12" height="6" viewBox="0 0 12 6"><circle cx="2" cy="3" r="1.05" fill="#222"/><circle cx="6" cy="3" r="1.05" fill="#222"/><circle cx="10" cy="3" r="1.05" fill="#222"/><path d="M2 3h8" stroke="#222" stroke-width="0.6"/></svg>
<svg class="a" style="left:651px;top:389px" width="12" height="12" viewBox="0 0 12 12"><path d="M6 1.5v9" stroke="#666" stroke-width="1.1"/><path d="M1.8 5.6h8.4" stroke="#222" stroke-width="1.1"/></svg>
<svg class="a" style="left:679px;top:389px" width="4" height="12" viewBox="0 0 4 12"><circle cx="2" cy="2.5" r="0.9" fill="#333"/><circle cx="2" cy="6" r="0.9" fill="#333"/><circle cx="2" cy="9.5" r="0.9" fill="#333"/></svg>
<div class="a" style="left:692px;top:386px;width:320px;height:15px;background:#f7f7f7;border-radius:7px"></div>
<svg class="a" style="left:695px;top:391px" width="8" height="8" viewBox="0 0 8 8"><path d="M1 4l5-3.2v6.4z" fill="#444"/></svg>
<div class="a" style="left:861px;top:391.5px;width:160px;height:6.5px;background:#707070;border:0.8px solid #4a4a4a;border-radius:3.5px"></div>
<svg class="a" style="left:0;top:362px;opacity:.6" width="45" height="42" viewBox="0 362 45 42"><circle cx="20.4" cy="384.5" r="18.6" fill="none" stroke="#d3e4bf" stroke-width="2.8" opacity=".75"/><path d="M20.4 365.9A18.6 18.6 0 0 1 39 384.5" fill="none" stroke="#c9d3d9" stroke-width="2.8" opacity=".75"/><path d="M9 373C15 375 22 380 24 391C17 389 10 383 9 373z" fill="#aab6be" opacity=".7"/><path d="M16.5 371C23 370 29.5 371.5 30 374.5C28.5 380 26 384 24 388C21.5 381 19 375 16.5 371z" fill="#d0e3b8" opacity=".75"/><path d="M26.5 372C32.5 377 32 387 24.5 392" fill="none" stroke="#aab5bd" stroke-width="1.6" opacity=".7"/></svg>
</body></html>
